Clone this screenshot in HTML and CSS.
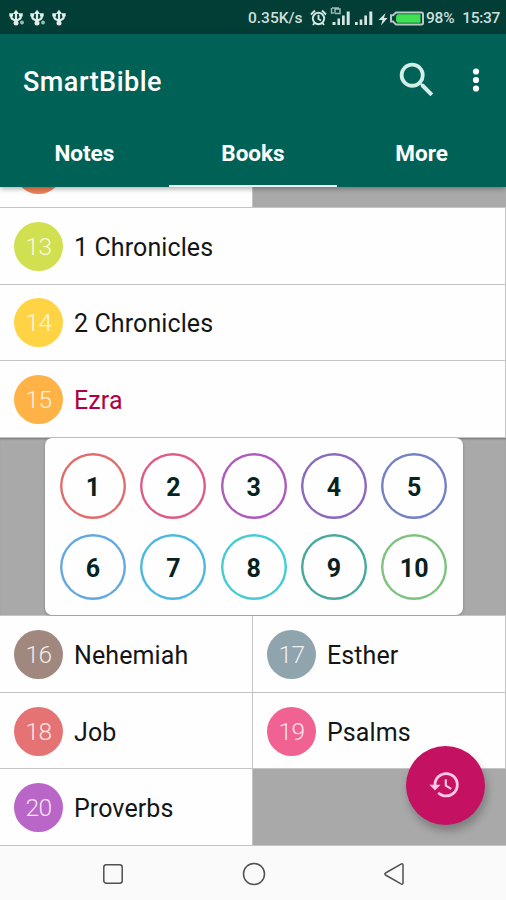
FILE: index.html
```html
<!DOCTYPE html>
<html lang="en">
<head>
<meta charset="utf-8">
<title>SmartBible</title>
<link rel="stylesheet" href="styles.css">
</head>
<body>
<div class="phone">
  <div class="status">
    <svg class="usb" width="58" height="18" viewBox="0 0 58 18">
      <defs>
        <g id="usb" fill="none" stroke="#e0eeeb" stroke-width="2.2">
          <path d="M7 3V15M2.200 6v1.800Q2.200 10.500 7 11.500Q11.800 10.500 11.800 7.800V6"/>
          <path d="M7 .8L10.200 5H3.800Z" fill="#e0eeeb" stroke="none"/>
          <circle cx="7" cy="14" r="2.500" fill="#e0eeeb" stroke="none"/>
          <path d="M.3 4.200h3.800v3.300H.3zM9.900 4.200h3.800v3.300H9.900z" fill="#e0eeeb" stroke="none"/>
        </g>
      </defs>
      <use href="#usb"/><use href="#usb" x="21"/><use href="#usb" x="43"/>
      <circle cx="13" cy="13.500" r="2" fill="#9cb9b4"/><circle cx="34" cy="13.500" r="2" fill="#9cb9b4"/>
    </svg>
    <span class="speed">0.35K/s</span>
    <svg class="signals" width="118" height="24" viewBox="0 0 118 24">
      <g fill="none" stroke="#d5e5e2" stroke-width="1.900">
        <circle cx="8.500" cy="13.500" r="5.700"/>
        <path d="M8.500 9.800V14l2.500 1.500M1 9.500L5 5.500M16 9.500L12 5.500M4.500 18L3 20M12.500 18L14 20"/>
      </g>
      <g fill="#d5e5e2">
        <path d="M22.500 17h3v3h-3zM27.500 13.500h2.500V20h-2.500zM32 10.500h2.700V20H32zM36.700 6.500h3V20h-3z"/>
        <path d="M45 17h2.700v3H45zM49.700 14.500h2.600V20h-2.600zM54.300 10.500h2.700V20h-2.700zM59.300 6.500h3V20h-3z"/>
        <path d="M75.500 8L68.500 15h4l-1.500 5.500 6.500-7.500h-3.500z"/>
      </g>
      <path d="M21.500 3v5h3M25 2.500v5M25 4h5v4.500h-5M22 3h7" fill="none" stroke="#9cb9b4" stroke-width="1.500"/>
      <path d="M86 7.400h25.500q1.500 0 1.500 1.500v9q0 1.500-1.500 1.500H86l-3-2.800h-2v-6.400h2z" fill="#083f38" stroke="#b9c8c5" stroke-width="2"/>
      <path d="M87.500 9.200h23v8.500h-23l-1.500-2v-4.500z" fill="#3fe052"/>
    </svg>
    <span class="battery">98%</span>
    <span class="clock">15:37</span>
  </div>

  <header class="appbar">
    <div class="toolbar">
      <h1 class="title">SmartBible</h1>
      <svg class="search" width="46" height="46" viewBox="0 0 24 24"><path d="M15.500 14h-.79l-.28-.27A6.471 6.471 0 0 0 16 9.500 6.500 6.500 0 1 0 9.500 16c1.610 0 3.090-.59 4.230-1.570l.27.28v.79l5 4.990L20.490 19l-4.990-5zm-6 0C7.010 14 5 11.990 5 9.500S7.010 5 9.500 5 14 7.010 14 9.500 11.990 14 9.500 14z" fill="#d3ede8"/></svg>
      <svg class="more" width="8" height="26" viewBox="0 0 8 26"><g fill="#fff"><circle cx="4" cy="4.500" r="3.100"/><circle cx="4" cy="13" r="3.100"/><circle cx="4" cy="21.500" r="3.100"/></g></svg>
    </div>
    <nav class="tabs">
      <div class="tab">Notes</div>
      <div class="tab active">Books</div>
      <div class="tab">More</div>
    </nav>
  </header>

  <main class="list">
    <div class="row clipped"><div class="cell half"><span class="num c12"></span></div></div>
    <div class="row"><div class="cell edge"><span class="num c13">13</span><span class="name">1 Chronicles</span></div></div>
    <div class="row"><div class="cell edge"><span class="num c14">14</span><span class="name">2 Chronicles</span></div></div>
    <div class="row"><div class="cell edge"><span class="num c15">15</span><span class="name selected">Ezra</span></div></div>
    <div class="chapters">
      <div class="panel">
        <span class="chapter k1">1</span><span class="chapter k2">2</span><span class="chapter k3">3</span><span class="chapter k4">4</span><span class="chapter k5">5</span>
        <span class="chapter k6">6</span><span class="chapter k7">7</span><span class="chapter k8">8</span><span class="chapter k9">9</span><span class="chapter k10">10</span>
      </div>
    </div>
    <div class="row"><div class="cell half"><span class="num c16">16</span><span class="name">Nehemiah</span></div><div class="cell edge"><span class="num c17">17</span><span class="name">Esther</span></div></div>
    <div class="row"><div class="cell half"><span class="num c18">18</span><span class="name">Job</span></div><div class="cell edge"><span class="num c19">19</span><span class="name">Psalms</span></div></div>
    <div class="row"><div class="cell half"><span class="num c20">20</span><span class="name">Proverbs</span></div></div>
    <div class="fab">
      <svg width="33.500" height="33.500" viewBox="0 0 24 24"><path d="M13 3a9 9 0 0 0-9 9H1l3.890 3.890.07.14L9 12H6c0-3.870 3.130-7 7-7s7 3.130 7 7-3.130 7-7 7c-1.930 0-3.680-.79-4.940-2.060l-1.420 1.420A8.954 8.954 0 0 0 13 21a9 9 0 0 0 0-18zm-1 5v5l4.280 2.540.72-1.210-3.500-2.080V8H12z" fill="#ffc9e6"/></svg>
    </div>
  </main>

  <footer class="navbar">
    <svg width="22" height="24" viewBox="0 0 22 24"><rect x="1.800" y="2.800" width="18.400" height="18.400" rx="2.500"/></svg>
    <svg width="24" height="24" viewBox="0 0 24 24"><circle cx="12" cy="12" r="10.500"/></svg>
    <svg width="22" height="24" viewBox="0 0 22 24"><path d="M18 2.200Q20 1.200 20 3.200V20.800Q20 22.800 18 21.800L2.500 13Q1 12 2.500 11Z"/></svg>
  </footer>
</div>
</body>
</html>
```

FILE: styles.css
```css
* { box-sizing: border-box; }
body { margin: 0; font-family: Roboto, "Liberation Sans", sans-serif; }
.phone { width: 506px; height: 900px; overflow: hidden; display: flex; flex-direction: column; background: #fafafa; }

.status { height: 34px; flex: none; display: flex; align-items: center; padding: 2px 6px 0 9px; background: #023e36; color: #cfdfdc; font-size: 15.500px; font-weight: 500; white-space: nowrap; }
.usb { flex: none; }
.speed { margin-left: 181px; width: 55px; }
.signals { flex: none; margin: -2px 0 0 7px; }
.battery { width: 32px; margin-left: -2px; letter-spacing: -.2px; }
.clock { margin-left: auto; letter-spacing: -.3px; }

.appbar { height: 153px; flex: none; background: #006156; color: #fff; position: relative; z-index: 2; box-shadow: 0 2px 5px rgba(0, 0, 0, .3); }
.toolbar { height: 90px; display: flex; align-items: center; padding: 2px 26px 0 23px; }
.title { margin: 3px 0 0; font-size: 27px; font-weight: 500; letter-spacing: .5px; flex: 1; }
.search { margin: 0 32px 0 0; }
.tabs { height: 63px; display: grid; grid-template-columns: repeat(3, 1fr); }
.tab { display: flex; align-items: center; justify-content: center; padding-bottom: 3px; font-size: 22.500px; font-weight: 700; border-bottom: 2px solid transparent; }
.tab.active { border-bottom-color: #e8f5f2; }

.list { flex: none; height: 659px; background: #a9a9a9; position: relative; }
.row { height: 76.600px; display: flex; border-bottom: 1.600px solid #c4c4c4; }
.row.clipped { height: 21px; align-items: flex-end; overflow: hidden; }
.row.clipped .cell { height: 77px; flex-shrink: 0; }
.cell { flex: 1; display: flex; align-items: center; padding: 1px 0 0 14px; background: #fefefe; }
.half { flex: none; width: 253px; border-right: 1px solid #c4c4c4; }
.edge { border-right: 1px solid #c4c4c4; }
.num { width: 49px; height: 49px; border-radius: 50%; flex: none; display: flex; align-items: center; justify-content: center; color: rgba(255, 255, 255, .85); font-size: 24.500px; font-weight: 300; letter-spacing: -.5px; }
.name { margin: 2px 0 0 11px; font-size: 25px; letter-spacing: .1px; color: #151515; }
.selected { color: #b00046; }
.c12 { background: #f08055; }
.c13 { background: #d1e050; }
.c14 { background: #ffd444; }
.c15 { background: #ffb347; }
.c16 { background: #a1887f; }
.c17 { background: #90a4ae; }
.c18 { background: #e57373; }
.c19 { background: #f06292; }
.c20 { background: #b966c8; }

.chapters { height: 178.500px; display: flex; padding-left: 44.500px; border-bottom: 1.600px solid #c4c4c4; box-shadow: inset 0 2px 2px -1px #777; }
.panel { width: 418px; height: 177px; border-radius: 7px; background: #fefefe; display: grid; grid-template-columns: repeat(5, 66px); grid-template-rows: 66px 66px; column-gap: 14.300px; row-gap: 14.300px; padding: 15.500px 0 0 15.500px; box-shadow: 0 1px 3px rgba(0, 0, 0, .25); }
.chapter { box-shadow: inset 0 0 0 2.400px currentColor; border-radius: 50%; display: flex; align-items: center; justify-content: center; padding-top: 3px; font-size: 25px; font-weight: 700; -webkit-text-fill-color: #06231f; }
.k1 { color: #e06c6c; }
.k2 { color: #dd5b88; }
.k3 { color: #ae5abd; }
.k4 { color: #8968bd; }
.k5 { color: #7480c4; }
.k6 { color: #63a8e0; }
.k7 { color: #4cb8e0; }
.k8 { color: #46cbd4; }
.k9 { color: #46a99b; }
.k10 { color: #7dc27f; }

.fab { position: absolute; right: 21.500px; bottom: 21.500px; width: 79px; height: 79px; border-radius: 50%; background: #c51162; display: flex; align-items: center; justify-content: center; box-shadow: 2px 6px 8px rgba(0, 0, 0, .26); }

.navbar { flex: 1; display: flex; align-items: center; justify-content: space-between; padding: 2px 101px 0 102px; background: #fafafa; }
.navbar svg { fill: none; stroke: #505050; stroke-width: 1.500; }
```
